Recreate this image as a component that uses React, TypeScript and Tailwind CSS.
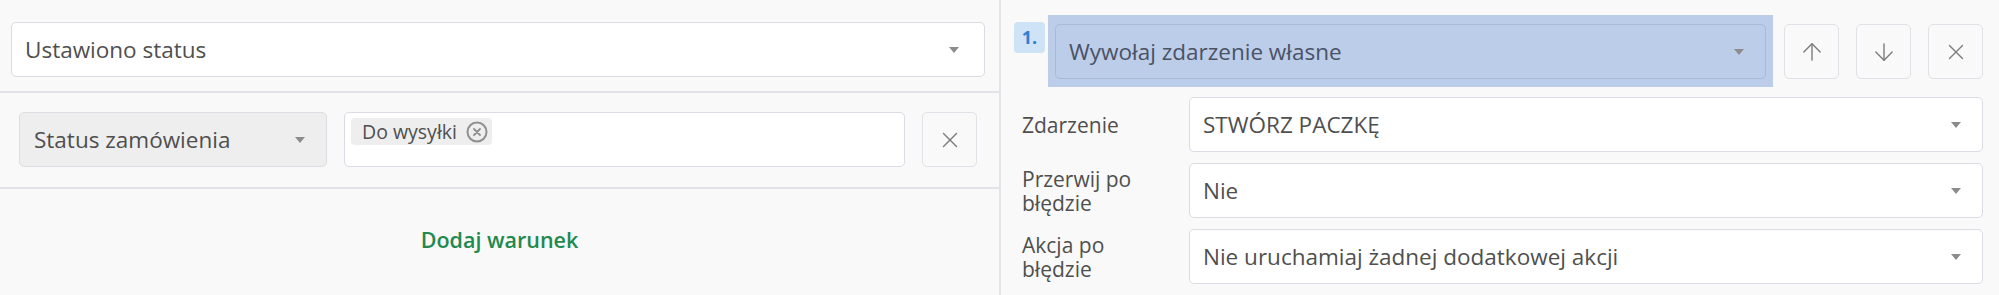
import { ArrowUp, ArrowDown, X } from 'lucide-react';

const font = { fontFamily: '"Open Sans", "Noto Sans", sans-serif' };

function Caret() {
  return (
    <svg width="10" height="6" viewBox="0 0 10 6" className="shrink-0">
      <path d="M0 0h10L5 6z" fill="#8c8c8c" />
    </svg>
  );
}

function Select({ text, className = '' }: { text: string; className?: string }) {
  return (
    <div
      className={`flex items-center justify-between h-[55px] bg-white border border-[#d9dce3] rounded-[5px] pl-[13px] pr-[21px] text-[22.5px] text-[#4f4f4f] ${className}`}
    >
      <span>{text}</span>
      <Caret />
    </div>
  );
}

function IconButton({ children }: { children: React.ReactNode }) {
  return (
    <div className="w-[55px] h-[55px] shrink-0 flex items-center justify-center border border-[#e0e2e7] rounded-[5px] bg-[#f9f9f9] text-[#7d7d7d]">
      {children}
    </div>
  );
}

function Field({ label, value }: { label: string; value: string }) {
  return (
    <div className="flex items-center">
      <div className="w-[150px] mr-[17px] text-[21px] leading-[24px] text-[#4f4f4f]">{label}</div>
      <Select text={value} className="flex-1" />
    </div>
  );
}

export default function App() {
  return (
    <div className="w-[1999px] h-[295px] flex bg-[#f9f9f9] overflow-hidden" style={font}>
      <div className="w-[1001px] flex flex-col border-r-2 border-[#e3e4e8]">
        <div className="h-[93px] pt-[22px] pl-[11px] pr-[14px] border-b-2 border-[#e1e3e8]">
          <Select text="Ustawiono status" className="pr-[25px]" />
        </div>
        <div className="h-[96px] pt-[19px] pl-[19px] pr-[22px] flex gap-[17px] border-b-2 border-[#e1e3e8]">
          <div className="w-[308px] h-[55px] flex items-center justify-between bg-[#eeeeee] border border-[#dcdee3] rounded-[5px] pl-[14px] pr-[21px] text-[22.5px] text-[#4f4f4f]">
            <span>Status zamówienia</span>
            <Caret />
          </div>
          <div className="flex-1 h-[55px] bg-white border border-[#d9dce3] rounded-[5px] pt-[5px] pl-[6px]">
            <div className="inline-flex items-center gap-[9px] h-[27px] bg-[#eeeeee] rounded-[4px] pl-[11px] pr-[4px] text-[19.5px] text-[#4f4f4f]">
              <span>Do wysyłki</span>
              <svg width="22" height="22" viewBox="0 0 22 22">
                <circle cx="11" cy="11" r="9.5" fill="none" stroke="#8f8f8f" strokeWidth="2" />
                <path d="M8 8l6 6M14 8l-6 6" stroke="#8f8f8f" strokeWidth="1.8" strokeLinecap="round" />
              </svg>
            </div>
          </div>
          <IconButton>
            <X size={26} strokeWidth={1.3} />
          </IconButton>
        </div>
        <div className="flex-1 flex items-center justify-center pb-[4px]">
          <span className="text-[21.5px] font-semibold text-[#1f8a4f]">Dodaj warunek</span>
        </div>
      </div>
      <div className="flex-1 flex flex-col pl-[21px] pr-[16px]">
        <div className="flex items-start pt-[15px] -ml-[8px]">
          <div className="w-[31px] h-[31px] mt-[7px] mr-[3px] rounded-[4px] bg-[#cfe3f7] flex items-center justify-center text-[18px] font-bold text-[#2f7fd3]">
            1.
          </div>
          <div className="flex-1 h-[72px] bg-[#bccdea] pt-[9px] px-[7px]">
            <div className="flex items-center justify-between h-[55px] border border-[#a8b9d9] rounded-[5px] pl-[13px] pr-[21px] text-[22.5px] text-[#4a5264]">
              <span>Wywołaj zdarzenie własne</span>
              <Caret />
            </div>
          </div>
          <div className="flex gap-[17px] ml-[11px] mt-[9px]">
            <IconButton>
              <ArrowUp size={28} strokeWidth={1.2} />
            </IconButton>
            <IconButton>
              <ArrowDown size={28} strokeWidth={1.2} />
            </IconButton>
            <IconButton>
              <X size={26} strokeWidth={1.3} />
            </IconButton>
          </div>
        </div>
        <div className="flex flex-col gap-[11px] mt-[10px]">
          <Field label="Zdarzenie" value="STWÓRZ PACZKĘ" />
          <Field label="Przerwij po błędzie" value="Nie" />
          <Field label="Akcja po błędzie" value="Nie uruchamiaj żadnej dodatkowej akcji" />
        </div>
      </div>
    </div>
  );
}
